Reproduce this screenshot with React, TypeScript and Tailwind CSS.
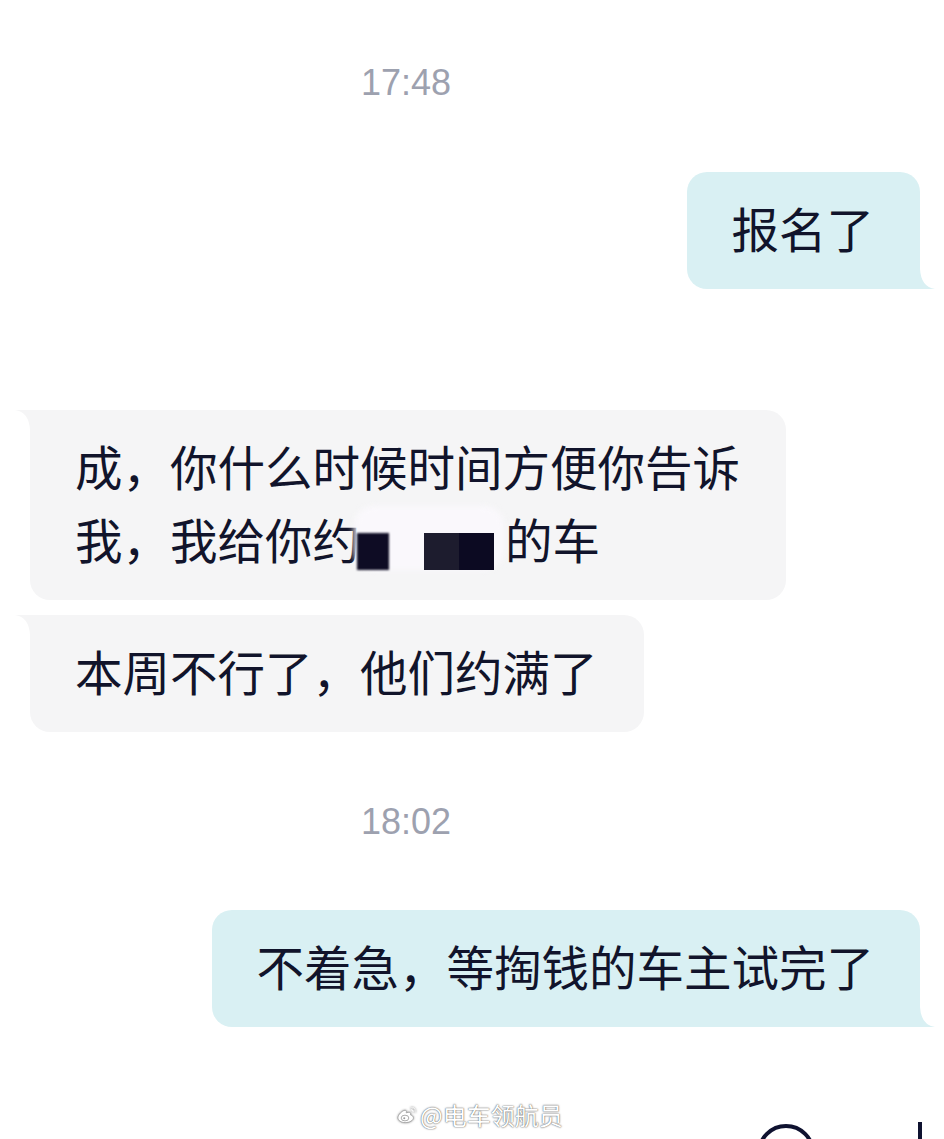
import React from "react";

const CJK = { fontFamily: '"Noto Sans CJK SC", "Noto Sans", sans-serif' };
const LAT = { fontFamily: '"Liberation Sans", Arial, sans-serif' };

function RightTail({ color }: { color: string }) {
  return (
    <svg className="absolute right-[-15px] bottom-0" width="15" height="20" viewBox="0 0 15 20">
      <path d="M0 0 Q1 18 15 20 L0 20 Z" fill={color} />
    </svg>
  );
}

function LeftTail({ color }: { color: string }) {
  return (
    <svg className="absolute left-[-15px] top-0" width="15" height="20" viewBox="0 0 15 20">
      <path d="M15 0 L0 0 Q14 2 15 20 Z" fill={color} />
    </svg>
  );
}

function Stamp({ t }: { t: string }) {
  return (
    <div className="w-[812px] flex justify-center">
      <span style={LAT} className="text-[36px] leading-[42px] text-[#9da1af]">
        {t}
      </span>
    </div>
  );
}

function RightBubble({ children }: { children: React.ReactNode }) {
  return (
    <div className="flex justify-end pr-[24px]">
      <div className="relative bg-[#d9f0f3] rounded-[20px] rounded-br-none pl-[45px] pr-[46px] pt-[19px] pb-[25px]">
        <div style={CJK} className="text-[47.5px] leading-[73px] text-[#11142b] whitespace-nowrap">
          {children}
        </div>
        <RightTail color="#d9f0f3" />
      </div>
    </div>
  );
}

function LeftBubble({ children }: { children: React.ReactNode }) {
  return (
    <div className="flex justify-start pl-[30px]">
      <div className="relative bg-[#f5f5f6] rounded-[20px] rounded-tl-none pl-[45px] pr-[46px] pt-[19px] pb-[25px]">
        <div style={CJK} className="text-[47.5px] leading-[73px] text-[#11142b] whitespace-nowrap">
          {children}
        </div>
        <LeftTail color="#f5f5f6" />
      </div>
    </div>
  );
}

function Censor() {
  return (
    <span className="relative inline-block w-[145px] h-[73px] align-top">
      <span className="absolute left-[-6px] top-[4px] w-[150px] h-[64px] rounded-[20px] bg-[#faf8fc] blur-[3px]" />
      <span className="absolute left-[-3px] top-[31px] w-[32px] h-[37px] bg-[#0e0c24] blur-[1px]" />
      <span className="absolute left-[64px] top-[31px] w-[35px] h-[37px] bg-[#1d1c2e] blur-[0.5px]" />
      <span className="absolute left-[99px] top-[31px] w-[35px] h-[37px] bg-[#0c0a22] blur-[0.5px]" />
    </span>
  );
}

function WeiboLogo() {
  return (
    <svg width="22" height="22" viewBox="0 0 24 24" className="drop-shadow-[0_0_1px_rgba(0,0,0,0.45)]">
      <path
        d="M10.1 20.3c-4.1 0-8-2-8-5.2 0-1.7 1-3.6 2.8-5.4 2.4-2.4 5.1-3.5 6.1-2.5.5.5.5 1.3.2 2.2-.2.5.4.2.4.2 1.9-.8 3.6-.8 4.2.1.3.5.3 1.1 0 1.8-.1.3 0 .4.3.5 1.4.4 2.9 1.5 2.9 3.1 0 2.7-3.9 5.2-8.9 5.2z"
        fill="#ffffff"
        stroke="#9a9a9a"
        strokeWidth="0.8"
      />
      <ellipse cx="9.8" cy="15.3" rx="4.2" ry="3.1" fill="none" stroke="#9a9a9a" strokeWidth="0.9" />
      <circle cx="9" cy="15.6" r="1.1" fill="#9a9a9a" />
      <path d="M16.5 4.2c2.6-.5 4.8 1.7 4.4 4.3" fill="none" stroke="#ffffff" strokeWidth="1.6" strokeLinecap="round" />
      <path d="M16.7 6.4c1.2-.2 2.1.8 1.9 1.9" fill="none" stroke="#ffffff" strokeWidth="1.4" strokeLinecap="round" />
      <path d="M16.5 4.2c2.6-.5 4.8 1.7 4.4 4.3" fill="none" stroke="#9a9a9a" strokeWidth="0.4" strokeLinecap="round" />
    </svg>
  );
}

export default function App() {
  return (
    <div className="relative w-[944px] h-[1139px] overflow-hidden bg-white flex flex-col">
      <div className="mt-[62px]">
        <Stamp t="17:48" />
      </div>
      <div className="mt-[68px]">
        <RightBubble>报名了</RightBubble>
      </div>
      <div className="mt-[121px]">
        <LeftBubble>
          成，你什么时候时间方便你告诉
          <br />
          我，我给你约
          <Censor />
          的车
        </LeftBubble>
      </div>
      <div className="mt-[15px]">
        <LeftBubble>本周不行了，他们约满了</LeftBubble>
      </div>
      <div className="mt-[69px]">
        <Stamp t="18:02" />
      </div>
      <div className="mt-[67px]">
        <RightBubble>不着急，等掏钱的车主试完了</RightBubble>
      </div>
      <div className="mt-[97px] flex items-start">
        <div className="ml-[757px] w-[58px] h-[58px] rounded-full border-[4px] border-[#0f1230]" />
        <div className="ml-[103px] mt-[-2px] w-[4px] h-[30px] bg-[#0f1230]" />
      </div>
      <div className="absolute left-[396px] top-[1101px] flex items-center gap-[2px]">
        <WeiboLogo />
        <span
          style={CJK}
          className="text-[24px] leading-[28px] text-white [text-shadow:0_0_2px_rgba(0,0,0,0.55),0_0_1px_rgba(0,0,0,0.5)]"
        >
          @电车领航员
        </span>
      </div>
    </div>
  );
}
